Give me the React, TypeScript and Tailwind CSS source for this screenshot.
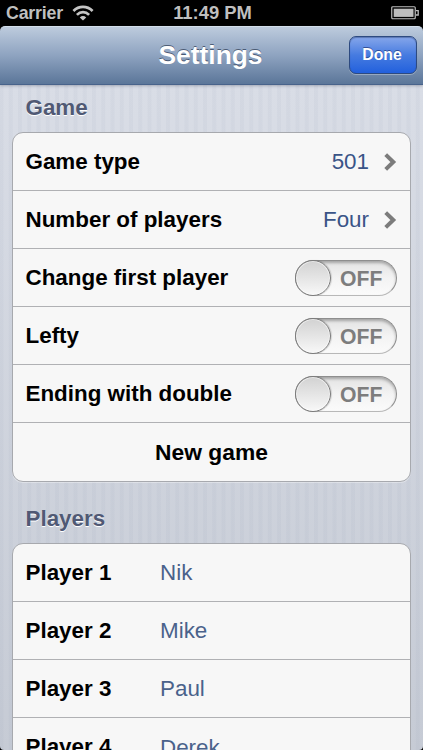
import type { ReactNode } from 'react';

const players = ['Nik', 'Mike', 'Paul', 'Derek'];

const StatusBar = () => (
  <div className="grid h-[26px] shrink-0 grid-cols-3 items-center bg-black pl-[6px] pr-[4px] text-[18.4px] leading-[26px] font-bold text-[#bfbfbf]">
    <div className="flex items-center gap-[9px]">
      <span className="text-[17.8px] tracking-[-0.2px]">Carrier</span>
      <svg width="22" height="16" viewBox="0 0 22 16" fill="none" stroke="#c4c4c4" strokeWidth="2.7">
        <path d="M1.4 6C6.9 .6 15.1 .6 20.6 6" />
        <path d="M4.9 9.9C8.5 6.3 13.5 6.3 17.1 9.9" />
        <path d="M11 15.5L7.8 12.4C9.6 10.6 12.4 10.6 14.2 12.4Z" fill="#c4c4c4" stroke="none" />
      </svg>
    </div>
    <span className="text-center whitespace-nowrap">11:49 PM</span>
    <svg className="justify-self-end" width="28" height="14" viewBox="0 0 28 14">
      <rect x=".75" y=".75" width="23.5" height="12" rx="1" fill="none" stroke="#bdbdbd" strokeWidth="1.2" />
      <rect x="2.7" y="2.7" width="19.8" height="8.2" fill="#bdbdbd" />
      <path d="M25 4.6H27.2V9H25" fill="none" stroke="#bdbdbd" strokeWidth="1.3" />
    </svg>
  </div>
);

const NavBar = () => (
  <div className="bg-black">
    <header className="relative flex h-[59px] items-center justify-center rounded-t-[5px] border-t border-b border-t-[#d3deea] border-b-[#48638b] bg-linear-to-b from-[#bdcbdd] via-[#8ea3c0] to-[#5b7699] shadow-[0_1px_3px_rgba(60,70,90,0.35)]">
      <h1 className="pr-[2px] pb-px text-[26.4px] leading-[30px] font-bold text-white [text-shadow:0_-1px_0_rgba(30,45,70,0.65)]">
        Settings
      </h1>
      <button className="absolute top-[9px] right-[6px] h-[38px] w-[68px] rounded-[7px] border border-[#2d4a80] bg-linear-to-b from-[#86a6ea] via-[#467be0] to-[#2260dd] pr-[2px] text-[15.8px] font-bold text-white shadow-[0_1px_0_rgba(255,255,255,0.3),inset_0_1px_1px_rgba(30,50,100,0.4)] [text-shadow:0_-1px_0_rgba(20,40,100,0.6)]">
        Done
      </button>
    </header>
  </div>
);

const SectionTitle = ({ children }: { children: ReactNode }) => (
  <h2 className="px-[25.5px] text-[22.4px] leading-[28px] font-bold text-[#505974] [text-shadow:0_1px_0_#ffffff]">
    {children}
  </h2>
);

const Group = ({ children }: { children: ReactNode }) => (
  <div className="ml-[12px] w-[399px] divide-y divide-[#b0b1b4] rounded-[11px] border border-[#a7a9ae] bg-[#f7f7f7] shadow-[0_1px_0_rgba(255,255,255,0.35)]">
    {children}
  </div>
);

const Row = ({ label, children }: { label: string; children: ReactNode }) => (
  <div className="flex h-[58px] items-center justify-between pr-[13px] pl-[12.5px]">
    <span className="text-[22.4px] font-bold text-black">{label}</span>
    {children}
  </div>
);

const Value = ({ children }: { children: string }) => (
  <div className="flex items-center gap-[15px] text-[22.4px] text-[#3a5487]">
    <span>{children}</span>
    <svg className="mt-px" width="13" height="18" viewBox="0 0 13 18" fill="none" stroke="#7c7c7c" strokeWidth="4">
      <path d="M1.7 1.6L9.3 9L1.7 16.4" />
    </svg>
  </div>
);

const Toggle = () => (
  <div className="flex h-[36px] w-[102px] items-center rounded-full border border-[#8e8e8e] border-b-[#b8b8b8] bg-linear-to-b from-[#e3e3e3] via-[#f3f3f3] to-[#fbfbfb] shadow-[inset_0_2px_3px_rgba(0,0,0,0.28)]">
    <span className="-ml-px size-[36px] shrink-0 rounded-full border border-[#7c7c7c] bg-linear-to-b from-[#d2d2d2] to-[#f8f8f8] shadow-[inset_0_0_0_1px_rgba(255,255,255,0.5),1px_0_1px_rgba(0,0,0,0.15)]" />
    <span className="ml-[9px] pt-[2px] text-[21.2px] font-bold text-[#7d7d7d]">OFF</span>
  </div>
);

const App = () => {
  return (
    <div className="flex h-[750px] w-[423px] flex-col overflow-hidden bg-black font-['Liberation_Sans',Arial,sans-serif]">
      <StatusBar />
      <NavBar />
      <main className="min-h-0 flex-1 rounded-b-[4px] bg-[repeating-linear-gradient(90deg,rgba(110,125,155,0.05)_0px,rgba(110,125,155,0.05)_3px,transparent_4px,transparent_8.25px,rgba(110,125,155,0.05)_9.25px),linear-gradient(#d9dde6,#c6cbd5)] pt-[9px]">
        <SectionTitle>Game</SectionTitle>
        <div className="h-[10px]" />
        <Group>
          <Row label="Game type">
            <Value>501</Value>
          </Row>
          <Row label="Number of players">
            <Value>Four</Value>
          </Row>
          <Row label="Change first player">
            <Toggle />
          </Row>
          <Row label="Lefty">
            <Toggle />
          </Row>
          <Row label="Ending with double">
            <Toggle />
          </Row>
          <div className="flex h-[58px] items-center justify-center text-[22.8px] font-bold">New game</div>
        </Group>
        <div className="h-[23px]" />
        <SectionTitle>Players</SectionTitle>
        <div className="h-[10px]" />
        <Group>
          {players.map((name, i) => (
            <div key={name} className="flex h-[58px] items-center pl-[12.5px] text-[22.4px]">
              <span className="w-[134.5px] font-bold text-black">Player {i + 1}</span>
              <span className="pt-px text-[#4a628b]">{name}</span>
            </div>
          ))}
        </Group>
      </main>
    </div>
  );
};

export default App;
